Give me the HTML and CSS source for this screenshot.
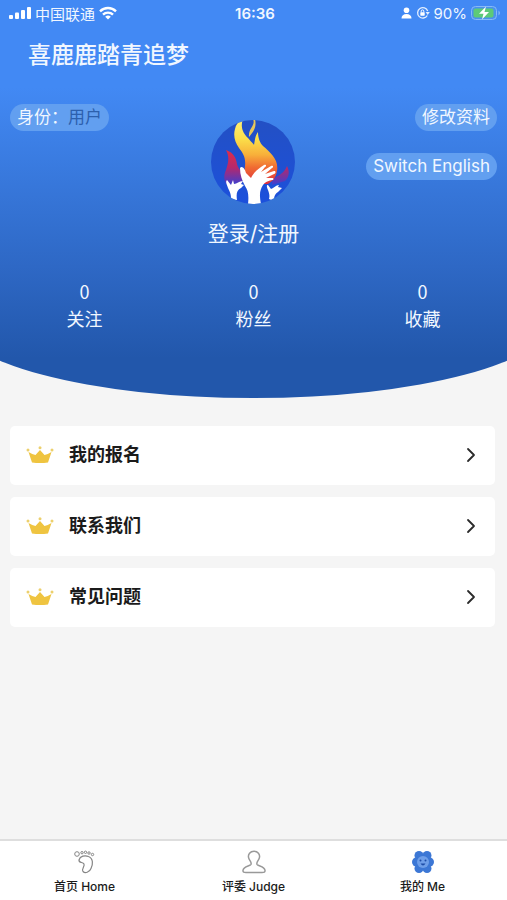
FILE: index.html
```html
<!DOCTYPE html>
<html lang="zh-CN">
<head>
<meta charset="utf-8">
<meta name="viewport" content="width=device-width, initial-scale=1">
<title>喜鹿鹿踏青追梦</title>
<link rel="stylesheet" href="styles.css">
</head>
<body>
<svg class="defs" width="0" height="0" aria-hidden="true">
  <symbol id="crown" viewBox="0 0 28 20">
    <path d="M2.500 7q4 2.500 7 3L14 5l4.500 5q3-.5 7-3L22 17.500q-8 1-16 0z" fill="#efc440"/>
    <g fill="#ecd06d"><circle cx="14" cy="2.800" r="1.500"/><circle cx="2" cy="5" r="1.500"/><circle cx="26" cy="5" r="1.500"/></g>
  </symbol>
  <symbol id="chevron" viewBox="0 0 10 16">
    <path d="M2 2l6 6-6 6" fill="none" stroke="#2b2b2b" stroke-width="1.800" stroke-linecap="round" stroke-linejoin="round"/>
  </symbol>
</svg>
<header class="hero">
  <div class="status">
    <div class="status-left">
      <svg width="22" height="14" viewBox="0 0 22 14" fill="#fff" aria-hidden="true"><rect x="0" y="9" width="4" height="4" rx="1"/><rect x="6" y="6.500" width="4" height="6.500" rx="1"/><rect x="12" y="4" width="4" height="9" rx="1"/><rect x="18" y="1" width="4" height="12" rx="1"/></svg>
      <span>中国联通</span>
      <svg width="18" height="14" viewBox="0 0 18 14" aria-hidden="true"><g fill="none" stroke="#fff" stroke-width="2.400"><path d="M1 5.300a11.500 11.500 0 0 1 16 0"/><path d="M4 8.600a7.200 7.200 0 0 1 10 0"/></g><path d="M6.200 10.800a4 4 0 0 1 5.600 0L9 13.600z" fill="#fff"/></svg>
    </div>
    <span class="clock">16:36</span>
    <div class="status-right">
      <svg width="11" height="12" viewBox="0 0 11 12" fill="#fff" aria-hidden="true"><circle cx="5.500" cy="3.300" r="2.800"/><path d="M.5 11.500c0-3 2-4.500 5-4.500s5 1.500 5 4.500z"/></svg>
      <svg width="14" height="14" viewBox="0 0 14 14" aria-hidden="true"><path d="M11.300 9.500A5.200 5.200 0 1 1 11.700 5" fill="none" stroke="#e4efff" stroke-width="1.300"/><path d="M9.600 6h4.200l-2.100 3z" fill="#e4efff"/><rect x="4.300" y="6.300" width="4.400" height="3.400" rx=".6" fill="#fff"/><path d="M5.200 6.500V5.200a1.300 1.300 0 0 1 2.600 0v1.300" fill="none" stroke="#fff"/></svg>
      <span>90%</span>
      <svg width="30" height="16" viewBox="0 0 30 16" aria-hidden="true"><rect x=".5" y="1.500" width="25" height="13" rx="4" fill="#4b92ec" stroke="#87b9f7"/><rect x="2.500" y="3.500" width="20" height="9" rx="2" fill="#5dca78"/><path d="M27.500 5.500q3 2.500 0 5z" fill="#87b9f7"/><path d="M15 1.500L8 8.800h4.500L11 14.500l7-7.400h-4.500z" fill="#fff"/></svg>
    </div>
  </div>
  <h1 class="title">喜鹿鹿踏青追梦</h1>
  <div class="profile">
    <div class="side"><span class="chip">身份：<span class="role">用户</span></span></div>
    <div class="account">
      <svg class="avatar" width="84" height="84" viewBox="0 0 84 84" role="img" aria-label="头像">
        <defs>
          <linearGradient id="flame" x1="0" y1="0" x2="0" y2="1"><stop offset="0" stop-color="#fdf07a"/><stop offset=".3" stop-color="#fbe04a"/><stop offset=".55" stop-color="#f8b03a"/><stop offset=".75" stop-color="#f06a32"/><stop offset="1" stop-color="#dd3040"/></linearGradient>
          <linearGradient id="ember" x1="0" y1="0" x2="0" y2="1"><stop offset="0" stop-color="#e12c48"/><stop offset=".5" stop-color="#b5286c"/><stop offset="1" stop-color="#3b3fd2"/></linearGradient>
          <linearGradient id="disc" x1="0" y1="0" x2="0" y2="1"><stop offset="0" stop-color="#2350c4"/><stop offset="1" stop-color="#1c50dc"/></linearGradient>
          <clipPath id="round"><circle cx="42" cy="42" r="42"/></clipPath>
        </defs>
        <g clip-path="url(#round)">
          <rect width="84" height="84" fill="url(#disc)"/>
          <path d="M15 30c8 3 10 8 11 14 1 5 5 7 8 12l-4 9H16c-4-6-3-10-1-15 2-6 4-13 0-20zM76 46c3 6 2 11-2 15l-13 4c-1-9 11-8 15-19z" fill="url(#ember)"/>
          <path d="M32-1c-3 8 0 14 5 19 3 4 5 5 6 7 1-5 1-9 4-13 0 6 2 11 5 14 8 7 16 14 14 25-1 6-4 10-9 13H38c-5-7-5-12-4-18 1-8-2-13-6-18-4-6-6-12-4-19 1-5 4-8 8-10z" fill="url(#flame)"/>
          <path d="M42-1c3 7-5 9-4 18 4-5 8-9 6-18z" fill="#e6c65b"/>
          <path d="M37 84c1-9 0-14-3-18-3-6-5-11-5-18 2-3 5 1 6 5l5 5c3-6 8-10 13-13 2-1 3 1 1 2l-4 5 10-6c2-1 3 1 1 2l-7 6 9-3c2 0 2 2 0 3l-8 4 6 0c2 0 2 2 0 2-4 1-7 2-9 5-3 5-4 9-2 19z" fill="#fff"/>
          <path d="M20 79c0-5-1-7-3-11-1-3-3-6-1-8l4 5 2-5 1 4c3 0 5-3 9-3l-2 3 3 1-3 3c-4 2-5 5-4 12zM58 79c1-4 0-6-1-9-1-2-2-5 0-5l3 4c3-1 5-4 8-4l-1 2 4 1-4 4c-3 2-4 4-4 9z" fill="#fff"/>
        </g>
      </svg>
      <a class="login" href="#login">登录/注册</a>
    </div>
    <div class="side side-end">
      <button class="chip" type="button">修改资料</button>
      <button class="chip" type="button">Switch English</button>
    </div>
  </div>
  <dl class="stats">
    <div><dt>关注</dt><dd>0</dd></div>
    <div><dt>粉丝</dt><dd>0</dd></div>
    <div><dt>收藏</dt><dd>0</dd></div>
  </dl>
</header>
<main class="menu">
  <a class="card" href="#signup"><svg width="28" height="20" aria-hidden="true"><use href="#crown"/></svg><span>我的报名</span><svg width="10" height="16" aria-hidden="true"><use href="#chevron"/></svg></a>
  <a class="card" href="#contact"><svg width="28" height="20" aria-hidden="true"><use href="#crown"/></svg><span>联系我们</span><svg width="10" height="16" aria-hidden="true"><use href="#chevron"/></svg></a>
  <a class="card" href="#faq"><svg width="28" height="20" aria-hidden="true"><use href="#crown"/></svg><span>常见问题</span><svg width="10" height="16" aria-hidden="true"><use href="#chevron"/></svg></a>
</main>
<nav class="tabs">
  <a href="#home">
    <svg width="24" height="24" viewBox="0 0 24 24" fill="none" stroke="#858585" aria-hidden="true"><circle cx="4" cy="4" r="2.300"/><circle cx="9" cy="2.700" r="1.200"/><circle cx="12.500" cy="2.300" r="1.200"/><circle cx="16" cy="3" r="1.200"/><circle cx="19.500" cy="4.500" r="1.200"/><path d="M6 10c1-4 6-5 9.500-3.500 5 2 4.500 8 2.500 12-1.500 4-6 5-8 3-2-2.500 2-5 1-7.500-1-2-5.500-1-5-4z" stroke-width="1.200"/></svg>
    首页 Home</a>
  <a href="#judge">
    <svg width="24" height="24" viewBox="0 0 24 24" fill="none" stroke="#999" stroke-width="1.500" aria-hidden="true"><path d="M12 1.300c-4 0-6 3-5.500 6 .3 3 3.500 4.500 2.500 7-1 2-7.500 1.500-8 6-.2 2 1 2.200 3 2.200h16c2 0 3.200-.2 3-2.200-.5-4.500-7-4-8-6-1-2.500 2.200-4 2.500-7 .5-3-1.500-6-5.500-6z"/></svg>
    评委 Judge</a>
  <a href="#me" aria-current="page">
    <svg width="24" height="24" viewBox="0 0 24 24" aria-hidden="true"><g fill="#3c77d5"><circle cx="8" cy="5.500" r="4.500"/><circle cx="16" cy="5.500" r="4.500"/><circle cx="18.500" cy="12" r="4.500"/><circle cx="16" cy="18.500" r="4.500"/><circle cx="8" cy="18.500" r="4.500"/><circle cx="5.500" cy="12" r="4.500"/></g><circle cx="12" cy="12" r="6" fill="#6f9fe9"/><g fill="#1e4da7"><circle cx="9.500" cy="10.500" r="1"/><circle cx="14.500" cy="10.500" r="1"/><path d="M9.500 13.500h5q-2.500 4-5 0z"/></g></svg>
    我的 Me</a>
</nav>
</body>
</html>
```
FILE: styles.css
```css
* {
  box-sizing: border-box;
}

body {
  display: flex;
  flex-direction: column;
  min-height: 100vh;
  margin: 0;
  overflow-x: hidden;
  background: #f5f5f5;
  color: #1b1b1b;
  font-family: Inter, "Noto Sans CJK SC", sans-serif;
}

a {
  color: inherit;
  text-decoration: none;
}

svg {
  display: block;
  flex: none;
}

.defs {
  position: absolute;
}

/* Blue header with a curved lower edge */
.hero {
  position: relative;
  z-index: 0;
  overflow: hidden;
  padding-bottom: 66px;
  color: #f1f7ff;
}

.hero::before {
  content: "";
  position: absolute;
  z-index: -1;
  inset: 0 -9%;
  border-radius: 0 0 50% 50% / 0 0 80px 80px;
  background: linear-gradient(#4289f4 0, #4289f4 22%, #2e68c5 67%, #2257ab 90%);
}

.status {
  display: grid;
  grid-template-columns: 1fr auto 1fr;
  align-items: center;
  height: 26px;
  padding: 0 6px 0 9px;
  font-size: 15px;
}

.status-left,
.status-right {
  display: flex;
  align-items: center;
  gap: 4px;
}

.status-right {
  justify-content: flex-end;
}

.clock {
  font-weight: 600;
}

.title {
  margin: 12px 28px 0;
  font-size: 23px;
  font-weight: 500;
  line-height: 34px;
}

.profile {
  display: grid;
  grid-template-columns: 1fr auto 1fr;
  margin: 32px 10px 0;
}

.side {
  display: flex;
  flex-direction: column;
  align-items: flex-start;
  gap: 22px;
  min-width: 0;
}

.side-end {
  align-items: flex-end;
}

.chip {
  padding: 0 7px;
  border: 0;
  border-radius: 14px;
  background: #629ff0;
  color: inherit;
  font: 17px/27px Inter, "Noto Sans CJK SC", sans-serif;
  white-space: nowrap;
}

.role {
  color: #2c60ad;
}

.account {
  display: flex;
  flex-direction: column;
  align-items: center;
  gap: 15px;
  padding-top: 16px;
}

.login {
  font-size: 21px;
  line-height: 30px;
}

.stats {
  display: grid;
  grid-template-columns: repeat(3, 1fr);
  margin: 29px 0 0;
  font-family: "Noto Sans CJK SC", sans-serif;
  font-size: 18px;
  line-height: 27px;
  text-align: center;
}

.stats div {
  display: flex;
  flex-direction: column-reverse;
}

.stats dd {
  margin: 0;
}

/* Menu cards */
.menu {
  display: flex;
  flex: 1;
  flex-direction: column;
  gap: 12px;
  padding: 28px 12px 28px 10px;
}

.card {
  display: flex;
  align-items: center;
  gap: 15px;
  height: 59px;
  padding: 0 19px 2px 16px;
  border-radius: 5px;
  background: #fff;
  font: 600 18px/26px "Noto Sans CJK SC", sans-serif;
}

.card span {
  flex: 1;
  padding-bottom: 3px;
}

/* Bottom navigation */
.tabs {
  display: grid;
  grid-template-columns: repeat(3, 1fr);
  height: 61px;
  border-top: 2px solid #dedede;
  background: #fff;
  font-size: 12px;
  font-weight: 500;
  line-height: 18px;
}

.tabs a {
  display: flex;
  flex-direction: column;
  align-items: center;
  gap: 4px;
  padding-top: 9px;
}
```
